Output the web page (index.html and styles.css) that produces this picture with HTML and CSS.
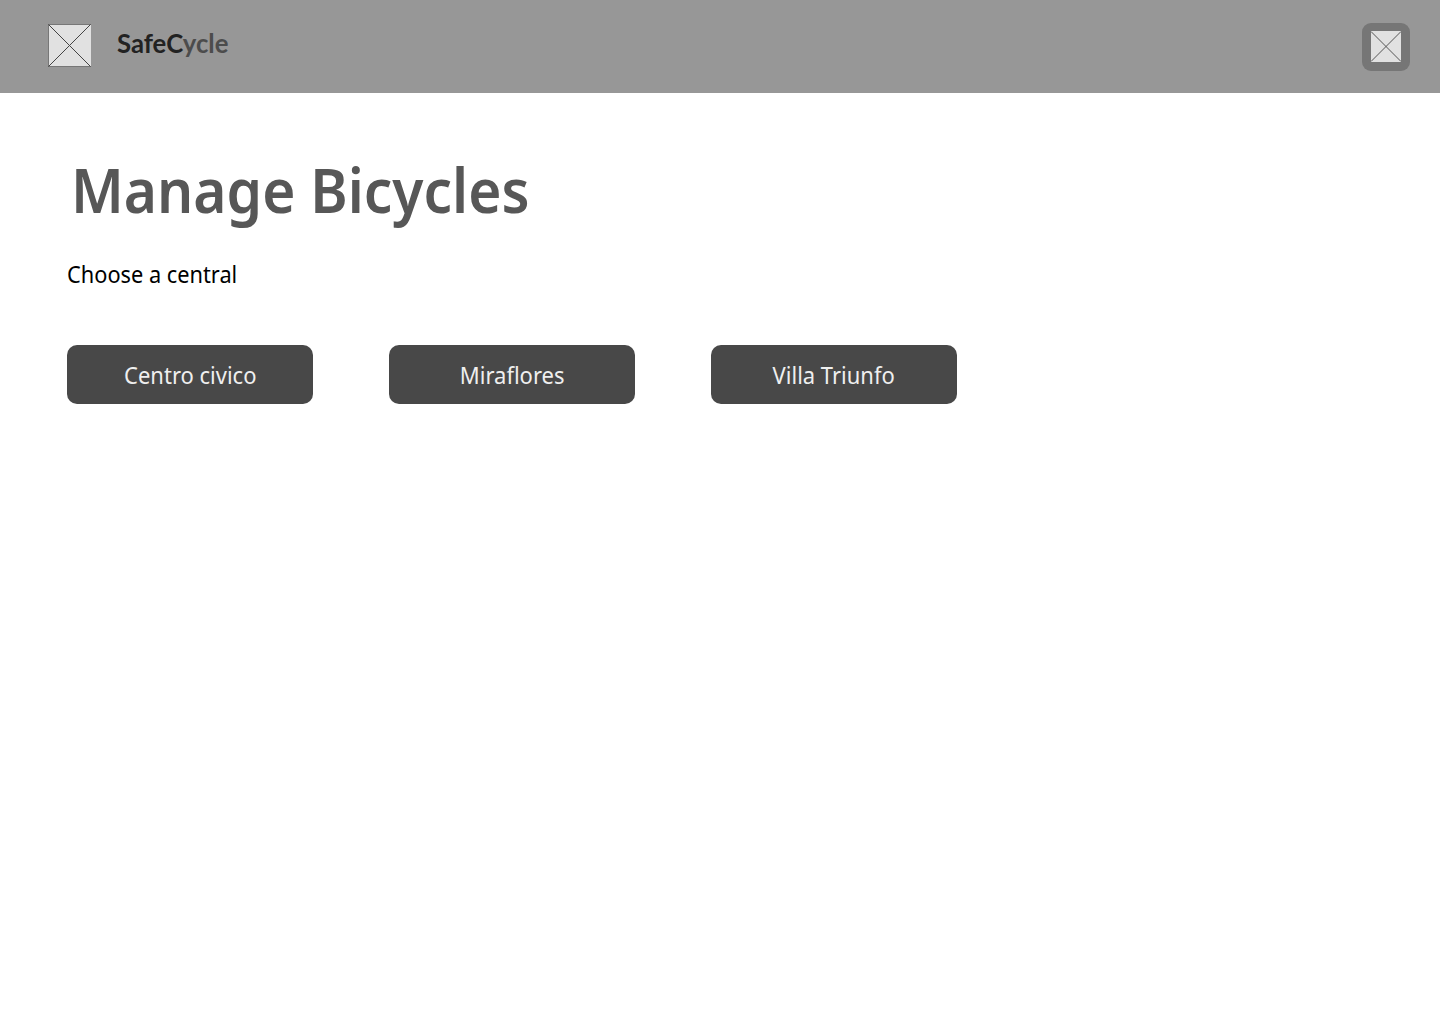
FILE: index.html
```html
<!DOCTYPE html>
<html lang="en">
<head>
<meta charset="utf-8">
<title>SafeCycle</title>
<link rel="stylesheet" href="styles.css">
</head>
<body>
<header class="topbar">
  <div class="brand">
    <svg class="brand-image" width="43" height="43" viewBox="0 0 43 43"><rect width="43" height="43" fill="#777"/><rect x="1" y="1" width="42" height="41" fill="#e1e1e1"/><path d="M.5 .5l42 42M42.5 .5l-42 42" stroke="#444" fill="none"/></svg>
    <span class="brand-name">SafeC<span class="brand-tail">ycle</span></span>
  </div>
  <button class="profile" aria-label="Profile">
    <svg width="30" height="31" viewBox="0 0 30 31"><rect width="30" height="31" fill="#e1e1e1"/><path d="M0 .5l30 30M30 .5l-30 30" stroke="#555" fill="none"/></svg>
  </button>
</header>
<main class="content">
  <h1 class="title"><span class="title-text">Manage Bicycles</span></h1>
  <p class="hint"><span class="hint-text">Choose a central</span></p>
  <div class="centrals">
    <button class="central"><span class="label">Centro civico</span></button>
    <button class="central"><span class="label">Miraflores</span></button>
    <button class="central"><span class="label">Villa Triunfo</span></button>
  </div>
</main>
</body>
</html>
```
FILE: styles.css
```css
* { box-sizing: border-box; }
body { margin: 0; background: #fff; font-family: "Noto Sans", sans-serif; }
button { border: 0; padding: 0; font: inherit; }
.topbar { display: flex; justify-content: space-between; align-items: center; height: 93px; padding: 0 30px 0 48px; background: #979797; }
.brand { display: flex; align-items: center; gap: 26px; margin-bottom: 2px; }
.brand-image { display: block; }
.brand-name { margin-bottom: 5px; font: 700 25.7px/30px Lato, sans-serif; color: #222; }
.brand-tail { color: #4c4c4c; }
.profile { display: flex; align-items: center; justify-content: center; width: 48px; height: 48px; padding-right: 1px; border-radius: 9px; background: #767676; }
.content { padding: 64px 67px 0; }
.title { margin: 0 0 0 4px; font-size: 62px; font-weight: 600; line-height: 64px; color: #575757; }
.title-text, .hint-text, .label { display: inline-block; transform-origin: left; white-space: nowrap; }
.hint { margin: 37px 0 0; font-size: 24px; line-height: 32px; color: #000; }
.centrals { display: flex; gap: 76px; margin-top: 55px; }
.central { width: 246px; height: 59px; border-radius: 10px; background: #484848; color: #efefef; font-size: 24px; line-height: 59px; }
.title-text { transform: scaleX(.917); }
.hint-text { transform: scaleX(.907); }
.label { transform: scaleX(.916); transform-origin: center; }
```
